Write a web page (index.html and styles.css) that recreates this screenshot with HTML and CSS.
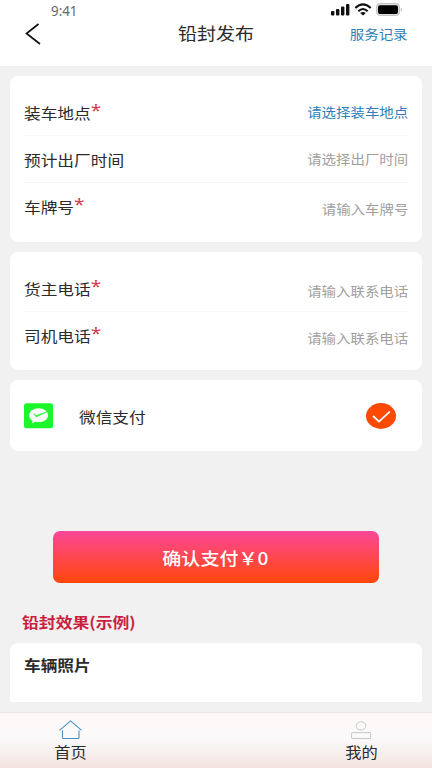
FILE: index.html
```html
<!DOCTYPE html>
<html lang="zh-CN">
<head>
<meta charset="utf-8">
<title>铅封发布</title>
<link rel="stylesheet" href="styles.css">
</head>
<body>
<header class="header">
  <div class="status">
    <span class="time">9:41</span>
    <svg class="signals" width="75" height="16" viewBox="0 0 75 16">
      <g fill="#111"><rect x="1" y="11" width="3.4" height="4.5" rx="1"/><rect x="6" y="9" width="3.4" height="6.5" rx="1"/><rect x="11" y="6.5" width="3.4" height="9" rx="1"/><rect x="16" y="4" width="3.4" height="11.5" rx="1"/></g>
      <g fill="none" stroke="#111" stroke-width="2.1"><path d="M25.3 8Q33 .8 40.7 8"/><path d="M28.3 11.2Q33 6.8 37.7 11.2"/></g>
      <path d="M30.2 12.9Q33 11 35.8 12.9L33 15.5Z" fill="#111"/>
      <rect x="46.5" y="3.5" width="23" height="12" rx="3.5" fill="#ddd" stroke="#bbb" stroke-width=".8"/>
      <rect x="48" y="5.3" width="20" height="8.6" rx="2" fill="#000"/>
      <path d="M70.8 7.6Q73 9.7 70.8 11.8Z" fill="#aaa"/>
    </svg>
  </div>
  <div class="nav">
    <svg class="back" width="18" height="24" viewBox="0 0 18 24"><path d="M14.5 2L2.5 11.5L16 22" fill="none" stroke="#111" stroke-width="1.7"/></svg>
    <h1 class="title">铅封发布</h1>
    <a class="records">服务记录</a>
  </div>
</header>
<main class="content">
  <section class="card place">
    <div class="row"><label class="label">装车地点<i>*</i></label><span class="value link">请选择装车地点</span></div>
    <div class="row"><label class="label">预计出厂时间</label><span class="value">请选择出厂时间</span></div>
    <div class="row low"><label class="label">车牌号<i>*</i></label><span class="value">请输入车牌号</span></div>
  </section>
  <section class="card phones">
    <div class="row low"><label class="label">货主电话<i>*</i></label><span class="value">请输入联系电话</span></div>
    <div class="row low"><label class="label">司机电话<i>*</i></label><span class="value">请输入联系电话</span></div>
  </section>
  <section class="card pay">
    <svg width="30" height="26" viewBox="0 0 30 26">
      <rect x="0" y=".2" width="29" height="25" rx="2.5" fill="#1cf72c"/>
      <path d="M14.6 5.2C9.2 5.2 5.2 8.2 5.2 12.2C5.2 14.5 6.5 16.6 8.6 17.9L8.2 20.3L11.2 18.8C12.3 19.1 13.4 19.2 14.6 19.2C20 19.2 24 16.2 24 12.2C24 8.2 20 5.2 14.6 5.2Z" fill="#fff"/>
      <path d="M9.8 10.8L12.3 14L23.2 8.6L12.5 12.4Z" fill="#1cf72c" stroke="#1cf72c" stroke-width=".6"/>
    </svg>
    <span class="label">微信支付</span>
    <svg class="check" width="30" height="26" viewBox="0 0 30 26"><ellipse cx="15" cy="13" rx="15" ry="12.9" fill="#fc4a05"/><path d="M7 13L13 18.6L23.8 8.7" fill="none" stroke="#fff" stroke-width="1.8"/></svg>
  </section>
  <button class="submit"><span>确认支付￥0</span></button>
  <h2 class="heading"><span>铅封效果(示例)</span></h2>
  <section class="card photos"><span class="label">车辆照片</span></section>
</main>
<nav class="tabs">
  <a class="tab">
    <svg width="24" height="20" viewBox="0 0 24 20"><path d="M1.5 10.3L12.6 .9L23.6 10.3M4.5 10.5V17.8Q4.5 18.5 5.2 18.5H20.3Q21 18.5 21 17.8V10.5" fill="none" stroke="#4a90c4" stroke-width="1.1"/></svg>
    <span>首页</span>
  </a>
  <a class="tab">
    <svg width="24" height="20" viewBox="0 0 24 20"><g fill="none" stroke="#c6c6c6"><ellipse cx="12" cy="5.9" rx="4.8" ry="4.2"/><rect x="2.6" y="12.6" width="19" height="5.9" rx=".5"/></g></svg>
    <span>我的</span>
  </a>
</nav>
</body>
</html>
```

FILE: styles.css
```css
* { box-sizing: border-box; }
body {
  margin: 0;
  width: 432px;
  height: 768px;
  overflow: hidden;
  display: flex;
  flex-direction: column;
  background: #f1f1f1;
  color: #2b2b2b;
  font-family: "Noto Sans CJK SC", sans-serif;
}
.header { height: 66px; background: #fff; flex: none; }
.status {
  height: 20px;
  display: flex;
  justify-content: space-between;
  padding: 0 27px 0 51px;
}
.time {
  font: 14.5px/21px "Noto Sans", sans-serif;
  color: #666;
  transform: scaleX(.92);
  transform-origin: left;
}
.nav {
  height: 28px;
  display: grid;
  grid-template-columns: 1fr auto 1fr;
  align-items: center;
  padding: 0 24px;
}
.title {
  margin: 0 0 2px;
  font-size: 17px;
  font-weight: 400;
  line-height: 24px;
  transform: scaleX(1.12);
}
.back { margin-bottom: 1px; }
.records {
  justify-self: end;
  margin-bottom: 1px;
  font-size: 12.9px;
  line-height: 20px;
  color: #2d80b9;
  transform: scaleX(1.12);
  transform-origin: right;
}
.content { flex: 1; padding: 10px 10px 0; }
.card { background: #fff; border-radius: 8px; padding: 0 14px; }
.place { height: 166px; padding-top: 13px; }
.phones { height: 118px; margin-top: 10px; padding-top: 13px; }
.row {
  height: 47px;
  display: flex;
  align-items: center;
  justify-content: space-between;
  border-bottom: 1px solid #f7f7f7;
}
.row:last-child { border-bottom-color: transparent; }
.label {
  font-size: 14.9px;
  line-height: 22px;
  transform: scaleX(1.12);
  transform-origin: left;
}
.row .label { margin-top: 1px; }
.label i {
  display: inline-block;
  font: 17px/14px "Noto Sans", sans-serif;
  color: #d6384b;
  transform: translateY(-3px);
}
.value {
  font-size: 12.9px;
  line-height: 20px;
  color: #a0a0a0;
  transform: scaleX(1.12);
  transform-origin: right;
}
.row.low .value { margin-top: 5px; }
.value.link { color: #2d80b9; }
.pay {
  height: 71px;
  margin-top: 10px;
  display: flex;
  align-items: center;
  padding: 1px 26px 0 14px;
}
.pay .label { margin: 1px 0 0 25px; }
.check { margin-left: auto; }
.submit {
  display: block;
  width: 326px;
  height: 52px;
  margin: 80px 0 0 43px;
  padding: 2px 1px 0 0;
  border: 0;
  border-radius: 7px;
  background: linear-gradient(#fc4799, #ff4709);
  color: #fff;
  font: 500 17px/24px "Noto Sans CJK SC", sans-serif;
}
.submit span { display: inline-block; transform: scaleX(1.12); }
.heading {
  margin: 28px 0 0 12px;
  font-size: 14.9px;
  line-height: 22px;
  color: #c91f40;
}
.heading span { display: inline-block; transform: scaleX(1.13); transform-origin: left; }
.photos { height: 59px; margin-top: 10px; padding-top: 9px; border-radius: 8px 8px 0 0; font-weight: 700; }
.photos .label { display: inline-block; }
.tabs {
  flex: none;
  height: 56px;
  display: flex;
  justify-content: space-between;
  padding: 7px 51px 0 50px;
  border-top: 1px solid #e8e8e8;
  background: linear-gradient(#fdf8f7, #fafafa 45%, #f3e3df);
}
.tab {
  width: 40px;
  display: flex;
  flex-direction: column;
  align-items: center;
  font-size: 14.5px;
  line-height: 20px;
}
.tab span { margin-top: 2px; transform: scaleX(1.12); }
```
